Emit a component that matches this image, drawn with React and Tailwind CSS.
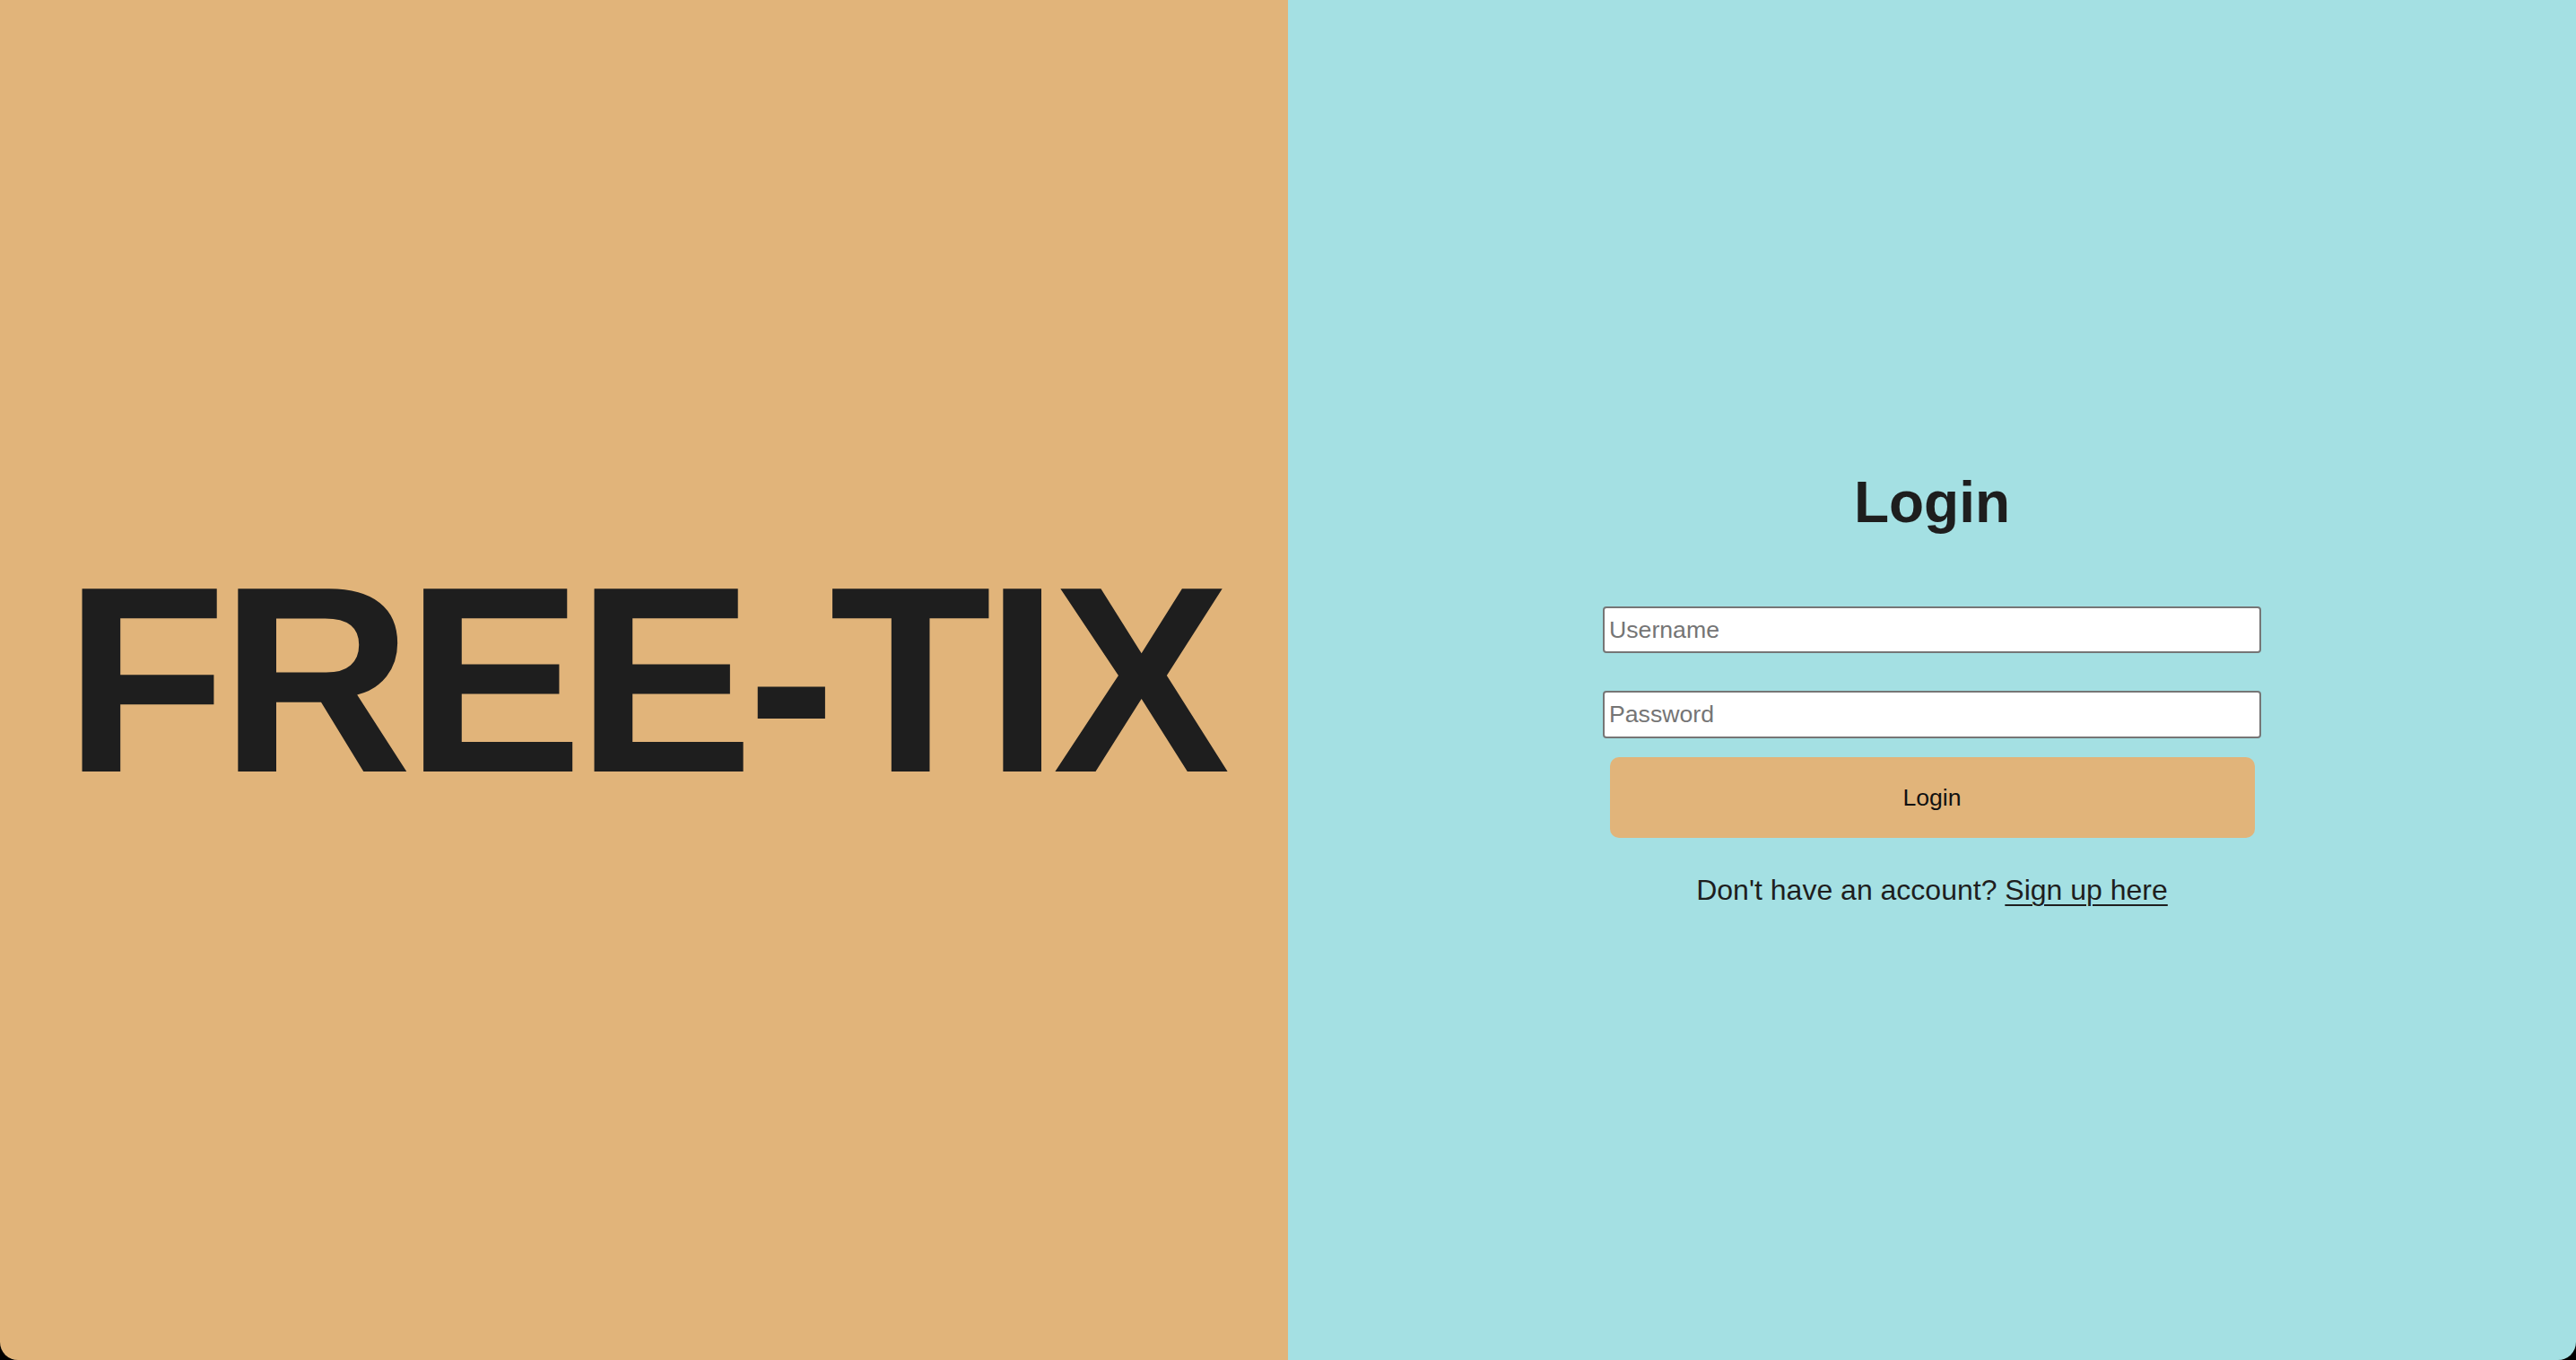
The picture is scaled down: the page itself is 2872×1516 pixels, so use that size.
import React from 'react';

export default function App() {
  return (
    <div className="w-full h-[1516px] bg-black">
      <div
        className="flex h-full w-full overflow-hidden rounded-b-[20px] text-[#1e1e1e]"
        style={{ fontFamily: '"Liberation Sans", Arial, sans-serif' }}
      >
        {/* brand side */}
        <div className="w-1/2 h-full bg-[#e1b47a] flex items-center justify-center">
          <h1 className="text-[296px] leading-none font-bold tracking-[-7px] whitespace-nowrap">FREE-TIX</h1>
        </div>

        {/* login side */}
        <div className="w-1/2 h-full bg-[#a4e0e3] flex flex-col items-center pt-[523px]">
          <h2 className="text-[64px] leading-[74px] font-bold">Login</h2>

          <input
            type="text"
            placeholder="Username"
            className="mt-[79px] w-[734px] h-[52px] bg-white border-2 border-[#767676] rounded-[4px] px-[5px] text-[26.67px] placeholder:text-[#757575] outline-none"
          />
          <input
            type="password"
            placeholder="Password"
            className="mt-[42px] w-[734px] h-[53px] bg-white border-2 border-[#767676] rounded-[4px] px-[5px] text-[26.67px] placeholder:text-[#757575] outline-none"
          />

          <button className="mt-[21px] w-[719px] h-[90px] bg-[#e1b47a] rounded-[10px] text-[26.67px] text-[#111]">
            Login
          </button>

          <p className="mt-[40px] text-[32px] leading-[37px]">
            Don't have an account?{' '}
            <a href="#" className="underline decoration-2 underline-offset-[5px]">Sign up here</a>
          </p>
        </div>
      </div>
    </div>
  );
}
